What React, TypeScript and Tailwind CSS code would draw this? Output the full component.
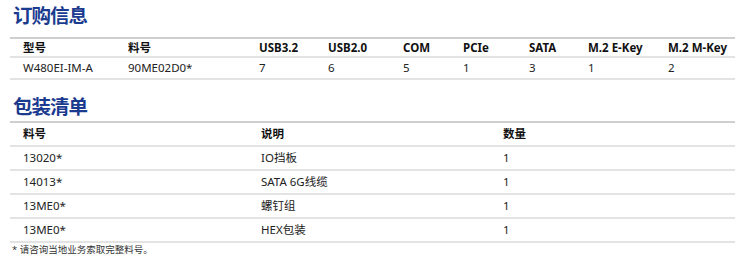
import React from "react";

const font = "font-['Noto_Sans','Noto_Sans_CJK_SC',sans-serif]";

const t1Head = ["型号", "料号", "USB3.2", "USB2.0", "COM", "PCIe", "SATA", "M.2 E-Key", "M.2 M-Key"];
const t1Row = ["W480EI-IM-A", "90ME02D0*", "7", "6", "5", "1", "3", "1", "2"];

const t2Rows = [
  ["13020*", "IO挡板", "1"],
  ["14013*", "SATA 6G线缆", "1"],
  ["13ME0*", "螺钉组", "1"],
  ["13ME0*", "HEX包装", "1"],
];

export default function App() {
  return (
    <div className={`w-[747px] h-[258px] bg-white overflow-hidden ${font}`}>
      <div className="h-[37px] pl-[13px] pt-[1px]">
        <h1 className="text-[19.5px] leading-[30px] font-bold text-[#1b3b8f] tracking-[-1px]">订购信息</h1>
      </div>
      <div className="ml-[10px] w-[725px] border-t-2 border-[#cfcfcf]">
        <div className="grid grid-cols-[105px_131px_69px_75px_60px_66px_59px_80px_80px] h-[19px] border-b-2 border-[#e3e3e3] items-center text-[11.5px] font-bold text-[#111]">
          {t1Head.map((h) => (
            <div key={h} className="pl-[13px] leading-[17px]">{h}</div>
          ))}
        </div>
        <div className="grid grid-cols-[105px_131px_69px_75px_60px_66px_59px_80px_80px] h-[22px] border-b-2 border-[#e3e3e3] items-center text-[11.5px] text-[#222]">
          {t1Row.map((c, i) => (
            <div key={i} className="pl-[13px] leading-[20px]">{c}</div>
          ))}
        </div>
      </div>
      <div className="h-[41px] pl-[13px] pt-[12px]">
        <h1 className="text-[19.5px] leading-[30px] font-bold text-[#1b3b8f] tracking-[-1px]">包装清单</h1>
      </div>
      <div className="ml-[10px] w-[725px] border-t-2 border-[#cfcfcf]">
        <div className="grid grid-cols-[238px_242px_245px] h-[24px] border-b-2 border-[#e3e3e3] items-center text-[11.5px] font-bold text-[#111]">
          <div className="pl-[13px]">料号</div>
          <div className="pl-[13px]">说明</div>
          <div className="pl-[13px]">数量</div>
        </div>
        {t2Rows.map((r, i) => (
          <div key={i} className="grid grid-cols-[238px_242px_245px] h-[24px] border-b-2 border-[#e3e3e3] items-center text-[11.5px] text-[#222]">
            {r.map((c, j) => (
              <div key={j} className="pl-[13px]">{c}</div>
            ))}
          </div>
        ))}
      </div>
      <div className="pl-[12px] h-[15px] flex items-center text-[9.5px] text-[#333]">* 请咨询当地业务索取完整料号。</div>
    </div>
  );
}
